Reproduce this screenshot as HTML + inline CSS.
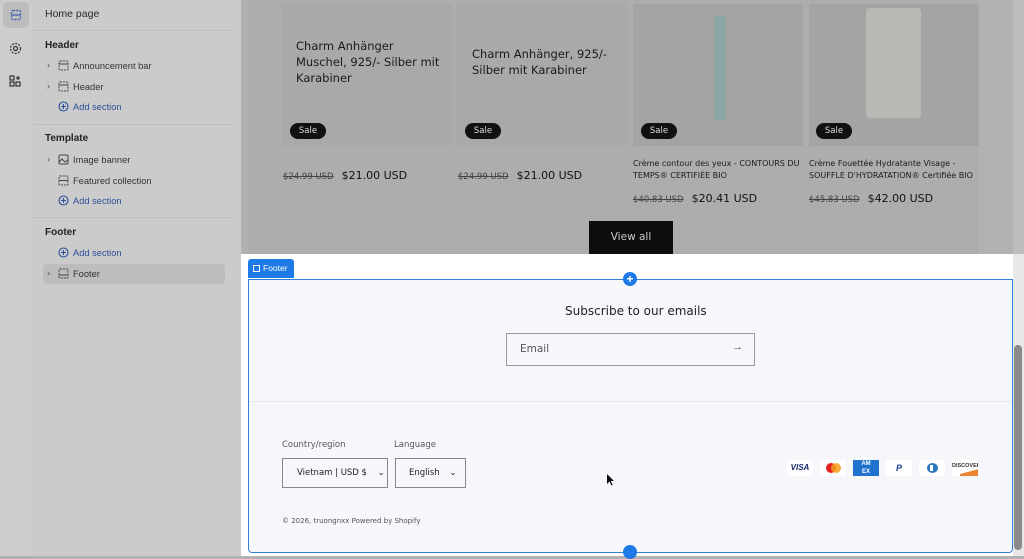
<!DOCTYPE html>
<html><head><meta charset="utf-8"><style>
*{box-sizing:border-box;margin:0;padding:0}
body{width:1024px;height:556px;overflow:hidden;background:#b2b2b2;font-family:"Liberation Sans",sans-serif;position:relative}
.abs{position:absolute}
.rail{left:0;top:0;width:34px;height:556px;background:#cdcdcd;border-right:1px solid #c4c4c4}
.side{left:34px;top:0;width:207px;height:556px;background:#cbcbcb}
.side .t{position:absolute;font-size:10.5px;color:#2a2a2a}
.side .h{font-weight:bold;font-size:10px;color:#222}
.side .i{font-size:9.3px;color:#333}
.side .a{font-size:9.3px;color:#2c4f9a}
.side svg{position:absolute}
.sep{position:absolute;left:0;width:200px;height:1px;background:#bdbdbd}
.preview{left:241px;top:0;width:783px;height:254px;background:#b1b1b1}
.card{position:absolute;top:4px;width:170px;height:142px;background:#a9a9a9}
.ct{position:absolute;font-family:"DejaVu Sans",sans-serif;color:#1a1a1a}
.sale{position:absolute;background:#111;color:#ddd;font-size:8.5px;border-radius:9px;width:36px;height:16px;line-height:16px;text-align:center;top:123px;font-family:"DejaVu Sans",sans-serif}
.old{font-size:8.5px;color:#444;text-decoration:line-through}
.price{font-size:11px;color:#111;margin-left:8px}
.foot{left:241px;top:254px;width:772px;height:302px;background:#fff}
.fbox{left:248px;top:279px;width:765px;height:274px;background:#f5f7fb;border:1.5px solid #2f7fd8;border-radius:0 0 4px 4px}
</style></head><body>
<div class="abs rail">
<div class="abs" style="left:3px;top:2px;width:26px;height:26px;background:#bcbcbc;border-radius:5px"></div>
<svg class="abs" style="left:10px;top:9px" width="12" height="12" viewBox="0 0 12 12" fill="none" stroke="#3a5ea8" stroke-width="1.2"><rect x="1.5" y="1.5" width="9" height="9" rx="1.5" stroke-dasharray="2 1.2"/><line x1="1.5" y1="6" x2="10.5" y2="6"/></svg>
<svg class="abs" style="left:9px;top:42px" width="13" height="13" viewBox="0 0 13 13" fill="none" stroke="#333" stroke-width="1.2"><circle cx="6.5" cy="6.5" r="2"/><circle cx="6.5" cy="6.5" r="5" stroke-dasharray="2 1.3"/></svg>
<svg class="abs" style="left:9px;top:75px" width="12" height="12" viewBox="0 0 12 12" fill="none" stroke="#333" stroke-width="1.2"><rect x="1" y="1" width="4" height="4"/><rect x="1" y="7" width="4" height="4"/><rect x="7" y="7" width="4" height="4"/><path d="M9 1v4M7 3h4"/></svg>
</div>
<div class="abs side">
<div class="t" style="left:11px;top:8px;font-size:10.5px">Home page</div>
<div class="sep" style="top:30px"></div>
<div class="t h" style="left:11px;top:40px">Header</div>
<div class="t i" style="left:13px;top:60px;color:#555">›</div>
<svg style="left:24px;top:60px" width="11" height="11" viewBox="0 0 11 11" fill="none" stroke="#444" stroke-width="1"><rect x="1" y="1" width="9" height="9" rx="1" stroke-dasharray="2 1"/><line x1="1" y1="4" x2="10" y2="4"/></svg>
<div class="t i" style="left:39px;top:61px">Announcement bar</div>
<div class="t i" style="left:13px;top:81px;color:#555">›</div>
<svg style="left:24px;top:81px" width="11" height="11" viewBox="0 0 11 11" fill="none" stroke="#444" stroke-width="1"><rect x="1" y="1" width="9" height="9" rx="1" stroke-dasharray="2 1"/><line x1="1" y1="4" x2="10" y2="4"/></svg>
<div class="t i" style="left:39px;top:82px">Header</div>
<svg style="left:24px;top:101px" width="11" height="11" viewBox="0 0 11 11" fill="none" stroke="#2c4f9a" stroke-width="1.1"><circle cx="5.5" cy="5.5" r="4.5"/><path d="M5.5 3v5M3 5.5h5"/></svg>
<div class="t a" style="left:39px;top:102px">Add section</div>
<div class="sep" style="top:124px"></div>
<div class="t h" style="left:11px;top:133px">Template</div>
<div class="t i" style="left:13px;top:154px;color:#555">›</div>
<svg style="left:24px;top:154px" width="11" height="11" viewBox="0 0 11 11" fill="none" stroke="#444" stroke-width="1"><rect x="1" y="1" width="9" height="9" rx="1.5"/><path d="M1 8l3-3 3 3 3-2"/></svg>
<div class="t i" style="left:39px;top:155px">Image banner</div>
<svg style="left:24px;top:175px" width="11" height="11" viewBox="0 0 11 11" fill="none" stroke="#444" stroke-width="1"><rect x="1" y="1" width="9" height="9" rx="1" stroke-dasharray="2 1"/><line x1="1" y1="5.5" x2="10" y2="5.5"/></svg>
<div class="t i" style="left:39px;top:176px">Featured collection</div>
<svg style="left:24px;top:195px" width="11" height="11" viewBox="0 0 11 11" fill="none" stroke="#2c4f9a" stroke-width="1.1"><circle cx="5.5" cy="5.5" r="4.5"/><path d="M5.5 3v5M3 5.5h5"/></svg>
<div class="t a" style="left:39px;top:196px">Add section</div>
<div class="sep" style="top:217px"></div>
<div class="t h" style="left:11px;top:227px">Footer</div>
<svg style="left:24px;top:247px" width="11" height="11" viewBox="0 0 11 11" fill="none" stroke="#2c4f9a" stroke-width="1.1"><circle cx="5.5" cy="5.5" r="4.5"/><path d="M5.5 3v5M3 5.5h5"/></svg>
<div class="t a" style="left:39px;top:248px">Add section</div>
<div class="abs" style="left:9px;top:264px;width:182px;height:20px;background:#bdbdbd;border-radius:4px"></div>
<div class="t i" style="left:13px;top:268px;color:#555">›</div>
<svg style="left:24px;top:268px" width="11" height="11" viewBox="0 0 11 11" fill="none" stroke="#444" stroke-width="1"><rect x="1" y="1" width="9" height="9" rx="1" stroke-dasharray="2 1"/><line x1="1" y1="7" x2="10" y2="7"/></svg>
<div class="t i" style="left:39px;top:269px">Footer</div>
</div>
<div class="abs preview">
<div class="abs" style="left:7px;top:0;width:730px;height:254px;background:#adadad"></div>
<div class="card" style="left:41px"></div>
<div class="card" style="left:216px"></div>
<div class="card" style="left:392px;background:#a4a4a4"></div>
<div class="card" style="left:568px;background:#a4a4a4"></div>
<div class="abs" style="left:473px;top:15px;width:12px;height:105px;background:#8fa6a6;border-radius:3px"></div>
<div class="abs" style="left:625px;top:8px;width:55px;height:110px;background:#b8b8b4;border-radius:4px"></div>
<div class="ct" style="left:55px;top:38px;font-size:11.5px;line-height:16px">Charm Anhänger<br>Muschel, 925/- Silber mit<br>Karabiner</div>
<div class="ct" style="left:231px;top:46px;font-size:11.5px;line-height:16px">Charm Anhänger, 925/-<br>Silber mit Karabiner</div>
<div class="sale" style="left:49px">Sale</div><div class="sale" style="left:224px">Sale</div><div class="sale" style="left:400px">Sale</div><div class="sale" style="left:575px">Sale</div>
<div class="ct" style="left:42px;top:164px"><span class="old">$24.99 USD</span><span class="price">$21.00 USD</span></div>
<div class="ct" style="left:217px;top:164px"><span class="old">$24.99 USD</span><span class="price">$21.00 USD</span></div>
<div class="ct" style="left:392px;top:158px;font-size:8px;line-height:12px">Crème contour des yeux - CONTOURS DU<br>TEMPS® CERTIFIÉE BIO</div>
<div class="ct" style="left:392px;top:187px"><span class="old">$40.83 USD</span><span class="price">$20.41 USD</span></div>
<div class="ct" style="left:568px;top:158px;font-size:8px;line-height:12px">Crème Fouettée Hydratante Visage -<br>SOUFFLE D'HYDRATATION® Certifiée BIO</div>
<div class="ct" style="left:568px;top:187px"><span class="old">$45.83 USD</span><span class="price">$42.00 USD</span></div>
<div class="abs" style="left:348px;top:221px;width:84px;height:33px;background:#0d0d0d;color:#ccc;font-size:10.5px;text-align:center;line-height:32px;font-family:'DejaVu Sans',sans-serif">View all</div>
<div class="abs" style="left:772px;top:0;width:11px;height:254px;background:#bdbdbd"></div>
</div>
<div class="abs foot"></div>
<div class="abs" style="left:1013px;top:254px;width:11px;height:302px;background:#e8e8e8"></div>
<div class="abs" style="left:1014px;top:345px;width:8px;height:205px;background:#8a8a8a;border-radius:4px"></div>
<div class="abs fbox">
<div class="abs" style="left:0;top:121px;width:762px;height:1px;background:#e6e8ec"></div>
<div class="abs" style="left:316px;top:24px;font-size:12px;color:#222;font-family:'DejaVu Sans',sans-serif">Subscribe to our emails</div>
<div class="abs" style="left:257px;top:53px;width:249px;height:33px;border:1px solid #999"></div>
<div class="abs" style="left:271px;top:63px;font-size:10.5px;color:#555;font-family:'DejaVu Sans',sans-serif">Email</div>
<div class="abs" style="left:483px;top:61px;font-size:11px;color:#555">→</div>
<div class="abs" style="left:33px;top:160px;font-size:8.5px;color:#555;font-family:'DejaVu Sans',sans-serif">Country/region</div>
<div class="abs" style="left:145px;top:160px;font-size:8.5px;color:#555;font-family:'DejaVu Sans',sans-serif">Language</div>
<div class="abs" style="left:33px;top:178px;width:106px;height:30px;border:1px solid #888;font-size:8.5px;color:#222;line-height:28px;padding-left:14px;font-family:'DejaVu Sans',sans-serif">Vietnam | USD $ <span style="margin-left:8px">⌄</span></div>
<div class="abs" style="left:146px;top:178px;width:71px;height:30px;border:1px solid #888;font-size:8.5px;color:#222;line-height:28px;padding-left:13px;font-family:'DejaVu Sans',sans-serif">English <span style="margin-left:7px">⌄</span></div>
<div class="abs" style="left:33px;top:237px;font-size:7px;color:#555;font-family:'DejaVu Sans',sans-serif">© 2026, truongnxx Powered by Shopify</div>
<div class="abs" style="left:538px;top:180px;width:26px;height:16px;background:#fff;font-size:8px;font-weight:bold;font-style:italic;color:#1a2a6c;text-align:center;line-height:16px">VISA</div>
<div class="abs" style="left:571px;top:180px;width:26px;height:16px;background:#fff"><div class="abs" style="left:6px;top:3px;width:10px;height:10px;border-radius:50%;background:#e52222"></div><div class="abs" style="left:11px;top:3px;width:10px;height:10px;border-radius:50%;background:#f59e1b;opacity:.85"></div></div>
<div class="abs" style="left:604px;top:180px;width:26px;height:16px;background:#1f72cd;color:#fff;font-size:6px;text-align:center;line-height:8px;font-weight:bold">AM<br>EX</div>
<div class="abs" style="left:637px;top:180px;width:26px;height:16px;background:#fff;color:#1b3c8c;font-size:9px;font-weight:bold;font-style:italic;text-align:center;line-height:16px">P</div>
<div class="abs" style="left:670px;top:180px;width:26px;height:16px;background:#fff"><div class="abs" style="left:8px;top:3px;width:11px;height:10px;border-radius:50%;background:#2e78c0"></div><div class="abs" style="left:11px;top:5px;width:3px;height:6px;background:#fff"></div></div>
<div class="abs" style="left:703px;top:180px;width:26px;height:16px;background:#fff;overflow:hidden"><div class="abs" style="left:0;top:3px;font-size:5.5px;color:#333;font-weight:bold">DISCOVER</div><div class="abs" style="left:8px;top:10px;width:30px;height:10px;background:#e98430;transform:skewY(-15deg)"></div></div>
</div>
<div class="abs" style="left:248px;top:259px;width:46px;height:19px;background:#1d7ae6;border-radius:3px 3px 0 0;color:#fff;font-size:8.5px;line-height:19px;padding-left:15px">Footer</div>
<div class="abs" style="left:253px;top:265px;width:7px;height:7px;border:1px solid #fff"></div>
<div class="abs" style="left:623px;top:272px;width:14px;height:14px;border-radius:50%;background:#1d7ae6;color:#fff;font-size:12px;line-height:14px;text-align:center;font-weight:bold">+</div>
<div class="abs" style="left:623px;top:545px;width:14px;height:14px;border-radius:50%;background:#1d7ae6"></div>
<svg class="abs" style="left:606px;top:474px" width="8" height="12" viewBox="0 0 8 12"><path d="M1 0v10l2.5-2.5 2 4 1.2-.6-2-3.9H8z" fill="#111"/></svg>
</body></html>
